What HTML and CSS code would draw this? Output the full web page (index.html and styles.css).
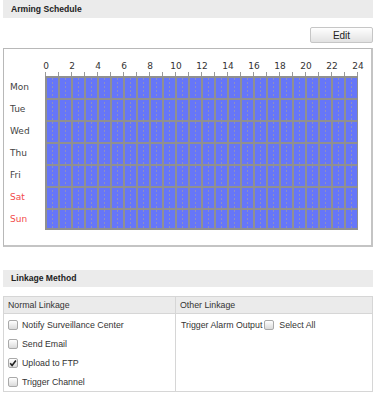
FILE: index.html
```html
<!DOCTYPE html>
<html>
<head>
<meta charset="utf-8">
<link rel="stylesheet" href="styles.css">
</head>
<body>
<div class="page">
  <div class="band">Arming Schedule</div>
  <div class="toolbar"><button class="btn">Edit</button></div>
  <div class="panel">
    <div class="hours">
      <span>0</span><span>2</span><span>4</span><span>6</span><span>8</span><span>10</span><span>12</span><span>14</span><span>16</span><span>18</span><span>20</span><span>22</span><span>24</span>
    </div>
    <div class="ticks"></div>
    <div class="sched">
      <div class="days">
        <div class="day">Mon</div>
        <div class="day">Tue</div>
        <div class="day">Wed</div>
        <div class="day">Thu</div>
        <div class="day">Fri</div>
        <div class="day weekend">Sat</div>
        <div class="day weekend">Sun</div>
      </div>
      <div class="track"></div>
    </div>
  </div>

  <div class="band band2">Linkage Method</div>
  <div class="table">
    <div class="col col1">
      <div class="th">Normal Linkage</div>
      <div class="rows">
        <div class="row"><span class="cb"></span><span>Notify Surveillance Center</span></div>
        <div class="row"><span class="cb"></span><span>Send Email</span></div>
        <div class="row"><span class="cb checked"><svg viewBox="0 0 10 10" width="10" height="10"><path d="M2.2 5.2 L4.1 7.4 L7.9 2.4" fill="none" stroke="#222" stroke-width="1.6"/></svg></span><span>Upload to FTP</span></div>
        <div class="row"><span class="cb"></span><span>Trigger Channel</span></div>
      </div>
    </div>
    <div class="col col2">
      <div class="th">Other Linkage</div>
      <div class="rows">
        <div class="row row2"><span>Trigger Alarm Output</span><span class="cb cb2"></span><span>Select All</span></div>
      </div>
    </div>
  </div>
</div>
</body>
</html>
```

FILE: styles.css
```css
html, body {
  margin: 0;
  padding: 0;
  background: #fff;
}
body {
  font-family: "Liberation Sans", Arial, sans-serif;
  color: #333;
  font-size: 8.8px;
}
.page {
  padding: 0 3px;
}
.band {
  height: 18px;
  line-height: 18px;
  background: #ebebeb;
  font-weight: bold;
  font-size: 8.6px;
  padding-left: 8px;
  color: #222;
}
.band2 {
  margin-top: 23px;
  height: 17px;
  line-height: 17px;
}
.toolbar {
  display: flex;
  justify-content: flex-end;
  padding-top: 9px;
}
.btn {
  box-sizing: border-box;
  width: 63px;
  height: 16px;
  padding: 0;
  margin: 0;
  border: 1px solid #c6c6c6;
  border-radius: 2px;
  background: linear-gradient(#fefefe, #e2e2e2);
  font-family: "Liberation Sans", Arial, sans-serif;
  font-size: 10px;
  color: #222;
}
.panel {
  margin-top: 5px;
  border: 1px solid #b8b8b8;
  border-right-width: 2px;
  border-bottom-width: 2px;
  border-right-color: #c4c4c4;
  border-bottom-color: #c4c4c4;
  padding: 12px 0 15px;
}
.hours {
  display: flex;
  margin-left: 29px;
  height: 11px;
}
.hours span {
  width: 26px;
  flex: none;
  text-align: center;
  font-family: "DejaVu Sans", Verdana, sans-serif;
  font-size: 9px;
  line-height: 11px;
  color: #333;
}
.ticks {
  margin-left: 41px;
  width: 313px;
  height: 4px;
  background: repeating-linear-gradient(to right, #9a9a9a 0 1px, transparent 1px 13px);
}
.sched {
  display: flex;
}
.days {
  width: 35px;
  padding-left: 6px;
  flex: none;
}
.day {
  height: 22px;
  line-height: 22px;
  font-family: "DejaVu Sans", Verdana, sans-serif;
  font-size: 9px;
  color: #444;
}
.day.weekend {
  color: #f24a4a;
}
.track {
  width: 313px;
  height: 154px;
  flex: none;
  background:
    linear-gradient(#909090, #909090) bottom / 100% 2px no-repeat,
    repeating-linear-gradient(to right, #909090 0 2px, transparent 2px 13px),
    repeating-linear-gradient(to bottom, #909090 0 2px, transparent 2px 22px),
    repeating-linear-gradient(to bottom, #6676f8 0 2px, transparent 2px 4px),
    repeating-linear-gradient(to right, #6676f8 0 7px, #8d8fc0 7px 8px, #6676f8 8px 13px);
}
.table {
  display: flex;
  margin-top: 9px;
  border: 1px solid #d6d6d6;
  height: 94px;
}
.col1 {
  width: 171px;
  flex: none;
}
.col2 {
  flex: 1;
  border-left: 1px solid #d6d6d6;
}
.th {
  height: 16px;
  line-height: 16px;
  background: #ebebeb;
  border-bottom: 1px solid #d6d6d6;
  padding-left: 4px;
  color: #333;
}
.rows {
  padding-top: 1px;
}
.row {
  display: flex;
  align-items: center;
  height: 19px;
  padding-left: 4px;
  gap: 4px;
  color: #333;
}
.row2 {
  padding-left: 5px;
  gap: 0;
}
.cb {
  box-sizing: border-box;
  width: 10px;
  height: 10px;
  border: 1px solid #a9a9a9;
  border-radius: 2px;
  background: linear-gradient(#ffffff, #dadada);
  flex: none;
  position: relative;
}
.cb svg {
  position: absolute;
  left: -1px;
  top: -1px;
}
.cb2 {
  margin: 0 5px 0 2px;
}
```
